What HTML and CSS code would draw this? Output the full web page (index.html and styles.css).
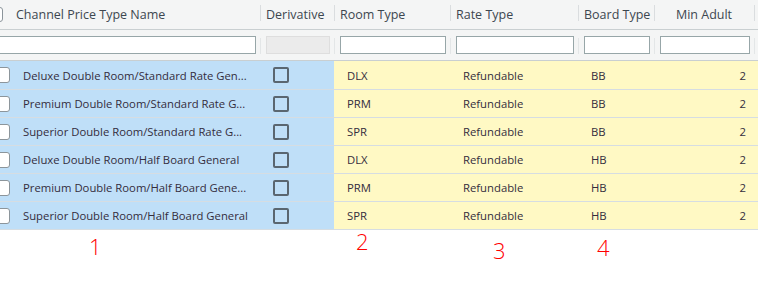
FILE: index.html
```html
<!DOCTYPE html>
<html lang="en">
<head>
  <meta charset="UTF-8">
  <title>Channel Price Types</title>
  <link rel="stylesheet" href="styles.css">
</head>
<body>

<div class="grid-wrap">
  <table class="price-grid">
    <colgroup>
      <col class="col-check">
      <col class="col-name">
      <col class="col-deriv">
      <col class="col-room">
      <col class="col-rate">
      <col class="col-board">
      <col class="col-adult">
      <col class="col-fill">
    </colgroup>
    <thead>
      <tr class="head-row">
        <th class="check-cell"><span class="head-box"></span></th>
        <th class="name-head">Channel Price Type Name</th>
        <th class="sep">Derivative</th>
        <th class="sep">Room Type</th>
        <th class="sep">Rate Type</th>
        <th class="sep">Board Type</th>
        <th class="sep center">Min Adult</th>
        <th class="sep"></th>
      </tr>
      <tr class="filter-row">
        <td colspan="2" class="name-filter"><input type="text" class="filter-input wide"></td>
        <td class="sep"><div class="filter-off"></div></td>
        <td class="sep"><input type="text" class="filter-input"></td>
        <td class="sep"><input type="text" class="filter-input"></td>
        <td class="sep"><input type="text" class="filter-input"></td>
        <td class="sep"><input type="text" class="filter-input"></td>
        <td class="sep"></td>
      </tr>
    </thead>
    <tbody id="rows"></tbody>
  </table>
</div>

<div class="notes">
  <span class="note n1">1</span>
  <span class="note n2">2</span>
  <span class="note n3">3</span>
  <span class="note n4">4</span>
</div>

<script>
const priceTypes = [
  { name: "Deluxe Double Room/Standard Rate Gen...", room: "DLX", rate: "Refundable", board: "BB", adults: 2 },
  { name: "Premium Double Room/Standard Rate G...", room: "PRM", rate: "Refundable", board: "BB", adults: 2 },
  { name: "Superior Double Room/Standard Rate G...", room: "SPR", rate: "Refundable", board: "BB", adults: 2 },
  { name: "Deluxe Double Room/Half Board General", room: "DLX", rate: "Refundable", board: "HB", adults: 2 },
  { name: "Premium Double Room/Half Board Gene...", room: "PRM", rate: "Refundable", board: "HB", adults: 2 },
  { name: "Superior Double Room/Half Board General", room: "SPR", rate: "Refundable", board: "HB", adults: 2 }
];

const tbody = document.getElementById("rows");
priceTypes.forEach(p => {
  const tr = document.createElement("tr");
  tr.className = "data-row";
  tr.innerHTML = `
    <td class="locked check-cell"><span class="row-box"></span></td>
    <td class="locked name-cell">${p.name}</td>
    <td class="locked"><span class="deriv-box"></span></td>
    <td class="open pad">${p.room}</td>
    <td class="open pad">${p.rate}</td>
    <td class="open pad">${p.board}</td>
    <td class="open num">${p.adults}</td>
    <td class="open"></td>`;
  tbody.appendChild(tr);
});
</script>

</body>
</html>
```

FILE: styles.css
```css
body {
  margin: 0;
  font-family: "Open Sans", "Noto Sans", sans-serif;
  background: #ffffff;
  color: #342d3d;
}
.grid-wrap {
  width: 758px;
  overflow: hidden;
}
.price-grid {
  margin-left: -12px;
  width: 775px;
  table-layout: fixed;
  border-collapse: collapse;
  font-size: 11.3px;
}
.col-check { width: 28px; }
.col-name { width: 244px; }
.col-deriv { width: 74px; }
.col-room { width: 116px; }
.col-rate { width: 128px; }
.col-board { width: 76px; }
.col-adult { width: 100px; }
.col-fill { width: 9px; }

.head-row th {
  height: 29px;
  padding: 0 0 0 6px;
  background: #f4f5f5;
  border-bottom: 1px solid #c9cfd1;
  color: #3d4750;
  font-size: 12.5px;
  font-weight: normal;
  text-align: left;
  white-space: nowrap;
  position: relative;
}
.head-row th.name-head { padding-left: 0; }
.head-row th.center { text-align: center; padding-left: 0; }
.head-row th.check-cell { padding-left: 2px; }
.sep { position: relative; }
.head-row th.sep::before,
.filter-row td.sep::before {
  content: "";
  position: absolute;
  left: 0;
  top: 5px;
  height: 16px;
  border-left: 1px solid #dadddf;
}
.filter-row td.sep::before {
  top: 8px;
  border-left-color: #e3e6e7;
}
.head-box {
  display: block;
  width: 11px;
  height: 13px;
  background: #fff;
  border: 1px solid #8c959b;
  border-radius: 3px;
}

.filter-row td {
  height: 30px;
  padding: 0 4px 0 6px;
  background: #f4f5f5;
  border-bottom: 1px solid #c9cfd1;
}
.filter-row td.name-filter { padding-left: 2px; }
.filter-input {
  display: block;
  box-sizing: border-box;
  width: 100%;
  height: 18px;
  margin: 0;
  padding: 0 3px;
  border: 1px solid #97a6a8;
  background: #fff;
  font: inherit;
}
.filter-off {
  height: 18px;
  box-sizing: border-box;
  background: #ebebeb;
  border: 1px solid #dedede;
}

.data-row td {
  height: 27px;
  padding: 0;
  border-bottom: 1px solid #d6dde2;
  white-space: nowrap;
  overflow: hidden;
}
.data-row:first-child td { height: 28px; }
.data-row td.locked { background: #bfdff8; }
.data-row td.open { background: #fff9c4; }
.data-row td.name-cell { padding-left: 7px; }
.data-row td.pad { padding-left: 13px; }
.data-row td.num { text-align: right; padding-right: 8px; }
.row-box {
  display: block;
  margin-left: 6px;
  width: 14px;
  height: 14px;
  background: #fff;
  border: 1px solid #8c959b;
  border-radius: 3px;
}
.deriv-box {
  display: block;
  margin-left: 13px;
  width: 12px;
  height: 12px;
  border: 2px solid #5a6670;
  border-radius: 2px;
}

.notes {
  position: relative;
  height: 62px;
}
.note {
  position: absolute;
  color: #ff0000;
  font-size: 22px;
  font-weight: 300;
  line-height: 1;
}
.n1 { left: 89px; top: 5px; }
.n2 { left: 356px; top: 0; }
.n3 { left: 493px; top: 9px; }
.n4 { left: 597px; top: 6px; }
```
